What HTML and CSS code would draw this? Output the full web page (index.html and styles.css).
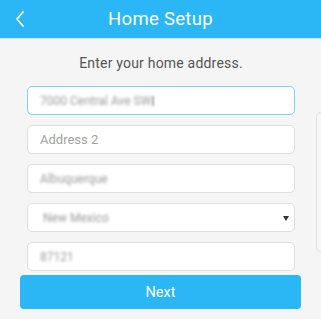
FILE: index.html
```html
<!DOCTYPE html>
<html lang="en">

<head>
  <meta charset="UTF-8">
  <meta name="viewport" content="width=device-width, initial-scale=1.0">
  <title>Home Setup</title>
  <link rel="stylesheet" href="styles.css">
</head>

<body>
  <div class="topbar">
    <svg class="back" width="12" height="18" viewBox="0 0 12 18">
      <path d="M9 2 L3 9 L9 16" fill="none" stroke="#fff" stroke-width="1.8" stroke-linecap="round" stroke-linejoin="round"/>
    </svg>
    <h1>Home Setup</h1>
  </div>

  <div class="content">
    <p class="prompt">Enter your home address.</p>
    <div class="fields">
      <div class="field focus"><span class="val">7000 Central Ave SW</span><span class="caret"></span></div>
      <div class="field"><span class="ph">Address 2</span></div>
      <div class="field"><span class="val">Albuquerque</span></div>
      <div class="field select"><span class="val">New Mexico</span><span class="arrow"></span></div>
      <div class="field"><span class="val">87121</span></div>
    </div>
  </div>

  <div class="peek"></div>
  <button class="next">Next</button>
</body>

</html>
```

FILE: styles.css
```css
body {
  font-family: Roboto, 'Noto Sans', sans-serif;
  background-color: #f5f5f5;
  margin: 0;
  height: 319px;
  overflow: hidden;
  position: relative;
}
.topbar {
  height: 38px;
  background-color: #2bb6f6;
  display: flex;
  align-items: center;
  justify-content: center;
  position: relative;
  box-shadow: 0 1px 1px rgba(0, 0, 0, 0.08);
}
.topbar h1 {
  margin: 0;
  color: #fff;
  font-size: 18.5px;
  font-weight: 400;
  letter-spacing: 0.3px;
}
.back {
  position: absolute;
  left: 14px;
  top: 10px;
}
.content {
  padding: 17px 26px 0 27px;
}
.prompt {
  margin: 0 0 15px;
  text-align: center;
  font-size: 14px;
  color: #555;
  letter-spacing: 0.2px;
}
.fields {
  display: flex;
  flex-direction: column;
  gap: 10px;
}
.field {
  height: 27px;
  background: #fff;
  border: 1px solid #dedede;
  border-radius: 5px;
  display: flex;
  align-items: center;
  padding: 0 12px;
  position: relative;
}
.field.focus {
  border-color: #7fd0f7;
}
.val {
  color: #9a9a9a;
  font-size: 12px;
  filter: blur(1.4px);
}
.caret {
  width: 2px;
  height: 10px;
  background: #aaa;
  margin-left: 1px;
  filter: blur(0.8px);
}
.ph {
  color: #a2a2a2;
  font-size: 13px;
}
.select .val {
  padding-left: 3px;
}
.arrow {
  position: absolute;
  right: 5px;
  top: 12px;
  border-left: 3px solid transparent;
  border-right: 3px solid transparent;
  border-top: 5px solid #333;
}
.peek {
  position: absolute;
  right: 0;
  top: 112px;
  width: 4px;
  height: 138px;
  border: 1px solid #e2e2e2;
  border-right: none;
  border-radius: 6px 0 0 6px;
  background: #f6f6f6;
}
.next {
  position: absolute;
  left: 20px;
  top: 275px;
  width: 281px;
  height: 34px;
  border: none;
  border-radius: 4px;
  background-color: #2bb6f6;
  color: #fff;
  font-family: Roboto, 'Noto Sans', sans-serif;
  font-size: 14.5px;
}
```
